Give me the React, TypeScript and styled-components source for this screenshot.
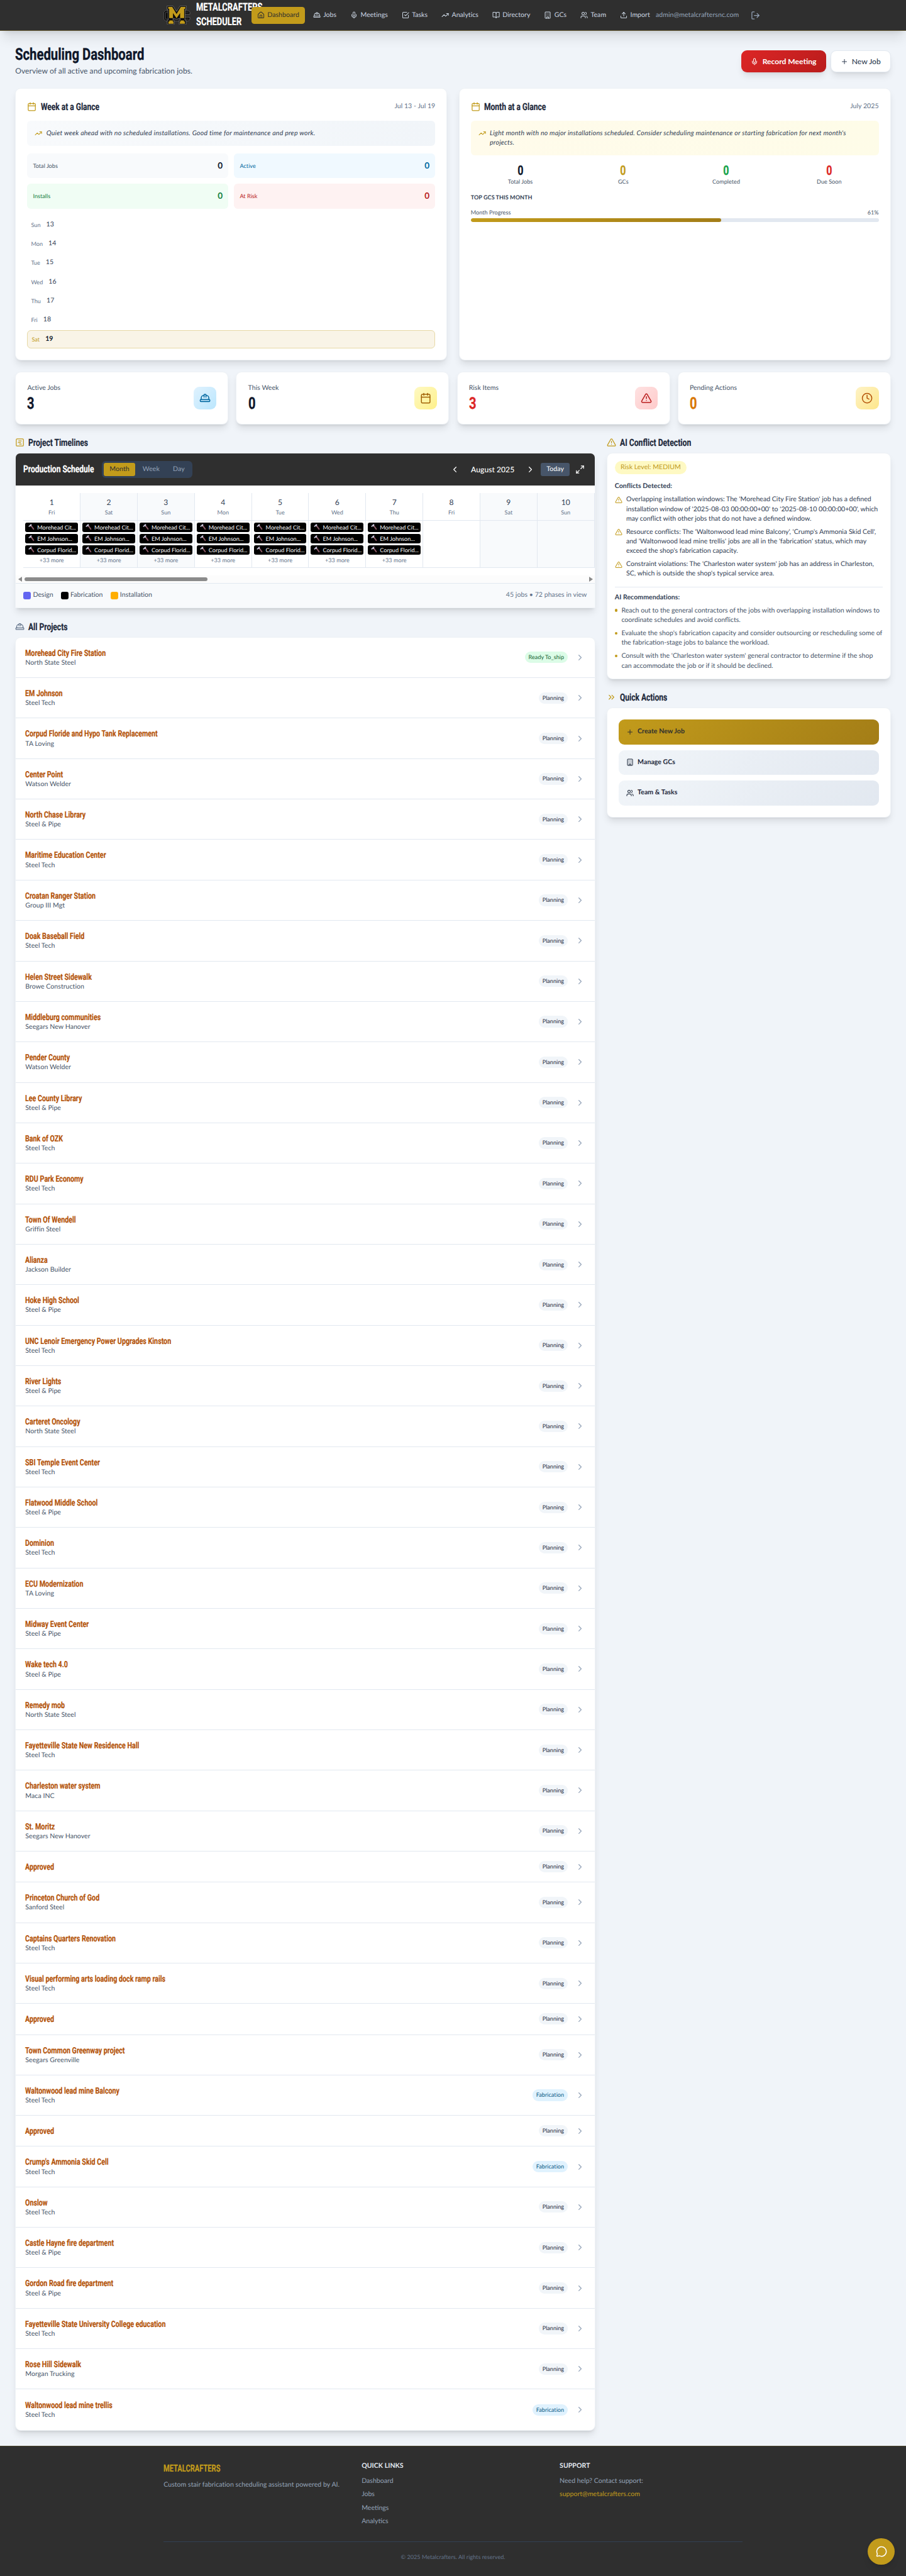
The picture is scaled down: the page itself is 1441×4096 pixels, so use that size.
import React from 'react';
import styled, { createGlobalStyle } from 'styled-components';
import {
  House, HardHat, Mic, TrendingUp, BookOpen, Building, Users, Upload, LogOut, Plus, Calendar,
  TriangleAlert, Clock, SquareChartGantt, ChevronLeft, ChevronRight, ChevronsRight, Maximize2, MessageCircle,
} from 'lucide-react';

const GOLD = '#c29b1b';
const DARK = '#2f2f2f';

const GlobalStyle = createGlobalStyle`
  * { box-sizing: border-box; }
  html, body { margin: 0; padding: 0; overflow: hidden; }
  body { background: #f0f4f9; }
  h1, h2, h3, p, ul { margin: 0; padding: 0; }
  ul { list-style: none; }
  svg { flex-shrink: 0; display: block; }
`;

const Page = styled.div`
  zoom: 0.757;
  height: 5411px;
  overflow: hidden;
  position: relative;
  display: flex;
  flex-direction: column;
  background: #f0f4f9;
  font-family: Lato, 'Liberation Sans', sans-serif;
  font-size: 14px;
  line-height: 20px;
  letter-spacing: 0.04px;
  color: #334155;
  text-rendering: geometricPrecision;
`;

/* Condensed display face: size is given as the nominal heading size. */
const Display = styled.span<{ $size: number; $squeeze?: number; $center?: boolean }>`
  display: inline-block;
  font-family: Roboto, 'Liberation Sans', sans-serif;
  font-weight: 700;
  font-size: ${(p) => p.$size * 1.14}px;
  letter-spacing: 0;
  white-space: nowrap;
  -webkit-text-stroke: 0.014em currentColor;
  transform: translateY(0.055em) scaleX(${(p) => p.$squeeze ?? 0.776});
  transform-origin: ${(p) => (p.$center ? 'center' : 'left')};
`;

/* ---------- Header ---------- */
const Header = styled.header`
  height: 65px;
  flex-shrink: 0;
  background: ${DARK};
  border-bottom: 1px solid #5b4f29;
  box-shadow: 0 20px 25px -5px rgba(0, 0, 0, 0.1), 0 8px 10px -6px rgba(0, 0, 0, 0.1);
  position: relative;
  z-index: 2;
`;
const HeaderInner = styled.div`
  width: 1280px;
  height: 64px;
  margin: 0 auto;
  padding-left: 32px;
  display: flex;
  align-items: center;
`;
const Brand = styled.div`
  width: 184px;
  flex-shrink: 0;
  display: flex;
  align-items: center;
  gap: 12px;
`;
const BrandName = styled.div`
  width: 116px;
  color: #fff;
  line-height: 28px;
`;
const Nav = styled.nav`
  width: 850px;
  flex-shrink: 0;
  display: flex;
  justify-content: space-between;
  position: relative;
`;
const NavItem = styled.a<{ $active?: boolean }>`
  height: 36px;
  padding: 0 12px;
  border-radius: 6px;
  display: flex;
  align-items: center;
  gap: 6px;
  white-space: nowrap;
  color: ${(p) => (p.$active ? DARK : '#cbd5e1')};
  background: ${(p) => (p.$active ? GOLD : 'transparent')};
`;
const Account = styled.div`
  display: flex;
  flex-shrink: 0;
  align-items: center;
  justify-content: space-between;
  width: 219px;
  color: #94a3b8;
`;

/* ---------- Main ---------- */
const Main = styled.main`
  padding: 32px;
  display: flex;
  flex-direction: column;
  gap: 24px;
  height: 5072px;
  flex-shrink: 0;
`;
const TitleBar = styled.div`
  height: 64px;
  display: flex;
  justify-content: space-between;
  align-items: center;
`;
const PageTitle = styled.h1`
  line-height: 36px;
  color: #0f172a;
`;
const Subtitle = styled.p`
  margin-top: 4px;
  font-size: 16px;
  line-height: 24px;
  color: #475569;
`;
const Buttons = styled.div`
  display: flex;
  gap: 9px;
`;
const Button = styled.button<{ $primary?: boolean }>`
  width: ${(p) => (p.$primary ? 178 : 127)}px;
  height: 46px;
  padding: 0;
  justify-content: center;
  border-radius: 12px;
  border: ${(p) => (p.$primary ? '0' : '1px solid #e2e8f0')};
  background: ${(p) => (p.$primary ? 'linear-gradient(135deg, #dc2626, #b91c1c)' : '#fff')};
  color: ${(p) => (p.$primary ? '#fff' : '#334155')};
  box-shadow: 0 10px 15px -3px rgba(0, 0, 0, 0.1), 0 4px 6px -4px rgba(0, 0, 0, 0.1);
  font: ${(p) => (p.$primary ? 700 : 500)} 16px/24px Lato, sans-serif;
  display: flex;
  align-items: center;
  gap: 8px;
  white-space: nowrap;
`;
const Card = styled.section<{ $pad?: number; $radius?: number }>`
  background: #fff;
  border: 1px solid #eef2f6;
  border-radius: ${(p) => p.$radius ?? 12}px;
  padding: ${(p) => p.$pad ?? 24}px;
  box-shadow: 0 10px 15px -3px rgba(0, 0, 0, 0.1), 0 4px 6px -4px rgba(0, 0, 0, 0.1);
`;
const GlanceGrid = styled.div`
  display: grid;
  grid-template-columns: 1fr 1fr;
  gap: 24px;
  height: 572px;
`;
const GlanceHead = styled.div`
  height: 28px;
  margin-bottom: 16px;
  display: flex;
  align-items: center;
  justify-content: space-between;
  color: #64748b;
`;
const IconTitle = styled.h2<{ $icon?: string }>`
  display: flex;
  align-items: center;
  gap: 8px;
  height: 28px;
  line-height: 28px;
  color: #1e293b;
  & > svg { color: ${(p) => p.$icon ?? GOLD}; }
`;
const Insight = styled.div<{ $warm?: boolean }>`
  padding: 16px ${(p) => (p.$warm ? 44 : 16)}px 16px 16px;
  margin-bottom: 16px;
  border-radius: 8px;
  display: flex;
  gap: 8px;
  font-style: italic;
  letter-spacing: 0.28px;
  background: ${(p) => (p.$warm ? 'linear-gradient(90deg, #fffbeb, #fefce8)' : 'linear-gradient(90deg, #f8fafc, #f1f5f9)')};
  & > svg { color: ${GOLD}; margin-top: 2px; }
`;
const WeekStats = styled.div`
  display: grid;
  grid-template-columns: 1fr 1fr;
  gap: 12px;
  margin-bottom: 16px;
`;
const WeekStat = styled.div<{ $bg: string; $ink: string; $label: string }>`
  height: 52px;
  padding: 0 12px;
  border-radius: 8px;
  display: flex;
  align-items: center;
  justify-content: space-between;
  background: ${(p) => p.$bg};
  color: ${(p) => p.$label};
  font-size: 12px;
  b { font-size: 18px; color: ${(p) => p.$ink}; font-weight: 700; }
`;
const Days = styled.div`
  display: flex;
  flex-direction: column;
  gap: 4px;
`;
const Day = styled.div<{ $today?: boolean }>`
  height: ${(p) => (p.$today ? 38 : 36)}px;
  padding: 0 8px;
  display: flex;
  align-items: center;
  gap: 12px;
  border-radius: 8px;
  font-size: 12px;
  color: ${(p) => (p.$today ? GOLD : '#64748b')};
  background: ${(p) => (p.$today ? '#f9f4e7' : 'transparent')};
  border: ${(p) => (p.$today ? '1px solid #e7d9a6' : '0')};
  span { font-size: 14px; font-weight: ${(p) => (p.$today ? 700 : 400)}; color: ${(p) => (p.$today ? '#0f172a' : '#334155')}; }
`;
const MonthStats = styled.div`
  display: grid;
  grid-template-columns: repeat(4, 1fr);
  gap: 8px;
  margin-bottom: 16px;
`;
const MonthStat = styled.div<{ $color: string }>`
  text-align: center;
  font-size: 12px;
  line-height: 16px;
  color: #475569;
  div { height: 32px; line-height: 32px; color: ${(p) => p.$color}; }
`;
const Overline = styled.h3`
  font-size: 12px;
  line-height: 16px;
  font-weight: 700;
  color: #334155;
  margin-bottom: 16px;
`;
const ProgressLabel = styled.div`
  display: flex;
  justify-content: space-between;
  font-size: 12px;
  line-height: 16px;
  margin-bottom: 4px;
  color: #475569;
`;
const Track = styled.div`
  height: 8px;
  border-radius: 4px;
  background: #e2e8f0;
  overflow: hidden;
`;
const Fill = styled.div`
  height: 8px;
  border-radius: 4px;
  background: linear-gradient(90deg, #c29b1b, #a37d17);
`;
const StatGrid = styled.div`
  display: grid;
  grid-template-columns: repeat(4, 1fr);
  gap: 16px;
  height: 110px;
`;
const StatCard = styled(Card)`
  display: flex;
  justify-content: space-between;
  align-items: center;
`;
const StatLabel = styled.div`
  color: #475569;
  margin-bottom: 4px;
`;
const StatValue = styled.div<{ $color: string }>`
  height: 36px;
  line-height: 36px;
  color: ${(p) => p.$color};
`;
const StatIcon = styled.div<{ $from: string; $to: string; $ink: string }>`
  width: 48px;
  height: 48px;
  border-radius: 12px;
  display: grid;
  place-items: center;
  color: ${(p) => p.$ink};
  background: linear-gradient(135deg, ${(p) => p.$from}, ${(p) => p.$to});
`;

const Columns = styled.div`
  display: grid;
  grid-template-columns: repeat(3, minmax(0, 1fr));
  gap: 24px;
  align-items: start;
`;
const Column = styled.div<{ $span?: number }>`
  grid-column: span ${(p) => p.$span ?? 1};
  min-width: 0;
  display: flex;
  flex-direction: column;
  gap: 24px;
`;
const Section = styled.div`
  min-width: 0;
  display: flex;
  flex-direction: column;
  gap: 8px;
`;

/* ---------- Schedule ---------- */
const Schedule = styled(Card)`
  height: 327px;
  padding: 0;
  overflow: hidden;
  display: flex;
  flex-direction: column;
  border-radius: 10px 10px 0 0;
`;
const ScheduleBar = styled.div`
  height: 68px;
  padding: 0 16px;
  display: flex;
  align-items: center;
  background: ${DARK};
  color: #fff;
`;
const ScheduleTitle = styled.div`
  width: 165px;
  line-height: 28px;
`;
const Toggle = styled.div`
  height: 36px;
  padding: 4px;
  display: flex;
  gap: 4px;
  border-radius: 8px;
  background: #334155;
`;
const ToggleItem = styled.div<{ $on?: boolean }>`
  padding: 4px 12px;
  border-radius: 4px;
  background: ${(p) => (p.$on ? GOLD : 'transparent')};
  color: ${(p) => (p.$on ? DARK : '#94a3b8')};
`;
const Period = styled.div`
  margin-left: auto;
  display: flex;
  align-items: center;
  gap: 8px;
  & > svg { margin: 0 4px; }
`;
const PeriodName = styled.div`
  width: 114px;
  text-align: center;
  font-size: 16px;
  font-weight: 500;
`;
const Today = styled.div`
  width: 61px;
  height: 28px;
  padding: 4px 0;
  text-align: center;
  border-radius: 4px;
  background: #475569;
`;
const Grid = styled.div`
  height: 189px;
  padding: 16px 0 16px 16px;
  display: flex;
  overflow: hidden;
`;
const DayCol = styled.div<{ $weekend?: boolean }>`
  width: 120px;
  flex-shrink: 0;
  border-right: 1px solid #e2e8f0;
  background: ${(p) => (p.$weekend ? '#f8fafc' : '#fff')};
`;
const DayHead = styled.div`
  height: 57px;
  padding-top: 8px;
  text-align: center;
  border-bottom: 1px solid #e2e8f0;
  font-size: 12px;
  line-height: 16px;
  color: #64748b;
  div { font-size: 16px; line-height: 24px; color: #334155; }
`;
const DayBody = styled.div`
  height: 100px;
  padding: 4px;
  border-bottom: 1px solid #e2e8f0;
  display: flex;
  flex-direction: column;
  gap: 4px;
  font-size: 12px;
  line-height: 16px;
  text-align: center;
  color: #64748b;
`;
const Phase = styled.div`
  height: 20px;
  padding-left: 5px;
  border-radius: 4px;
  background: #000;
  color: #fff;
  font-size: 12px;
  line-height: 20px;
  display: flex;
  align-items: center;
  gap: 4px;
  white-space: nowrap;
  overflow: hidden;
`;
const ScrollBar = styled.div`
  height: 15px;
  padding: 3px 3px 3px 5px;
  display: flex;
  align-items: center;
  background: #fcfcfc;
`;
const Thumb = styled.div`
  width: 385px;
  height: 9px;
  border-radius: 5px;
  margin-left: 5px;
  margin-right: auto;
  background: #8b8b8b;
`;
const Arrow = styled.i<{ $left?: boolean }>`
  border: 5px solid transparent;
  border-width: 6px 8px;
  ${(p) => (p.$left ? 'border-right-color: #8b8b8b; border-left: 0;' : 'border-left-color: #8b8b8b; border-right: 0;')}
`;
const Legend = styled.div`
  flex: 1;
  padding: 0 16px;
  border-top: 1px solid #e2e8f0;
  background: #f8fafc;
  display: flex;
  align-items: center;
  gap: 16px;
  color: #475569;
`;
const LegendItem = styled.div<{ $color: string }>`
  display: flex;
  align-items: center;
  gap: 4px;
  &::before {
    content: '';
    width: 16px;
    height: 16px;
    border-radius: 4px;
    background: ${(p) => p.$color};
  }
`;
const LegendNote = styled.div`
  margin-left: auto;
  color: #64748b;
`;

/* ---------- Projects ---------- */
const ProjectList = styled(Card)`
  padding: 0;
`;
const ProjectRow = styled.div<{ $short?: boolean }>`
  height: ${(p) => (p.$short ? 65 : 85)}px;
  padding: 0 20px;
  display: flex;
  align-items: center;
  gap: 16px;
  border-bottom: 1px solid #e2e8f0;
  &:last-child { border-bottom: 0; }
`;
const ProjectText = styled.div`
  flex: 1;
  color: #475569;
`;
const ProjectName = styled.div`
  height: 24px;
  line-height: 24px;
  color: #b45309;
`;
const Badge = styled.span<{ $tone: string }>`
  padding: 4px 8px;
  border-radius: 12px;
  font-size: 12px;
  line-height: 16px;
  ${(p) =>
    p.$tone === 'Planning'
      ? 'background: #f1f5f9; color: #1e293b;'
      : p.$tone === 'Fabrication'
        ? 'background: #e0f2fe; color: #075985;'
        : 'background: #dcfce7; color: #166534;'}
`;

/* ---------- Side panel ---------- */
const Risk = styled.div`
  display: inline-block;
  padding: 4px 12px;
  border-radius: 14px;
  background: #fef9c3;
  color: ${GOLD};
  margin-bottom: 16px;
  vertical-align: top;
`;
const SideHeading = styled.h3`
  font-size: 14px;
  line-height: 20px;
  font-weight: 700;
  color: #334155;
  margin-bottom: 8px;
`;
const Items = styled.ul`
  display: flex;
  flex-direction: column;
  gap: 8px;
  letter-spacing: 0;
`;
const Conflict = styled.li`
  display: flex;
  gap: 8px;
  & > svg { color: ${GOLD}; margin-top: 2px; }
`;
const Recommendation = styled.li`
  display: flex;
  gap: 8px;
  color: #475569;
  &::before {
    content: '';
    width: 6px;
    height: 6px;
    margin-top: 6px;
    border-radius: 50%;
    background: ${GOLD};
    flex-shrink: 0;
  }
`;
const Divider = styled.div`
  height: 1px;
  background: #e2e8f0;
  margin: 16px 0 12px;
`;
const Actions = styled(Card)`
  display: flex;
  flex-direction: column;
  gap: 12px;
`;
const Action = styled.div<{ $gold?: boolean }>`
  height: 52px;
  padding: 0 16px;
  border-radius: 12px;
  display: flex;
  align-items: center;
  gap: 8px;
  font-weight: 700;
  color: ${(p) => (p.$gold ? DARK : '#1e293b')};
  background: ${(p) => (p.$gold ? 'linear-gradient(135deg, #c29b1b, #a37d17)' : 'linear-gradient(135deg, #f1f5f9, #e2e8f0)')};
`;

/* ---------- Footer ---------- */
const Footer = styled.footer`
  flex: 1;
  background: ${DARK};
  border-top: 1px solid #464026;
  color: #94a3b8;
`;
const FooterInner = styled.div`
  width: 1216px;
  margin: 0 auto;
  padding-top: 32px;
`;
const FooterGrid = styled.div`
  height: 136px;
  display: grid;
  grid-template-columns: repeat(3, 1fr);
  gap: 32px;
`;
const FooterBrand = styled.div`
  height: 28px;
  line-height: 28px;
  margin-bottom: 12px;
  color: ${GOLD};
`;
const FooterHeading = styled.h3`
  font-size: 14px;
  line-height: 20px;
  font-weight: 700;
  color: #e2e8f0;
  margin-bottom: 12px;
`;
const FooterEmail = styled.li`
  color: ${GOLD};
`;
const Copyright = styled.div`
  margin-top: 32px;
  padding-top: 24px;
  border-top: 1px solid #334155;
  font-size: 12px;
  line-height: 16px;
  text-align: center;
  color: #64748b;
`;
const Chat = styled.button`
  position: absolute;
  right: 24px;
  bottom: 24px;
  width: 56px;
  height: 56px;
  padding: 0;
  border: 0;
  border-radius: 50%;
  display: grid;
  place-items: center;
  background: ${GOLD};
  color: #fff;
  box-shadow: 0 10px 15px -3px rgba(0, 0, 0, 0.1), 0 4px 6px -4px rgba(0, 0, 0, 0.1);
`;

const Logo = () => (
  <svg width="56" height="40" viewBox="0 0 56 40">
    <path d="M4.500 10H52l3.500 3.500V18H44v-1.500H12.500v9H44V24.500h11.500v4L52 32H4.500L0.500 28V14z" fill="#0b0b0b" stroke="#858585" strokeWidth="0.7" />
    <path d="M53 13.500H6L4 15.500v11.500l1.500 1.500H53" fill="none" stroke="#303030" strokeWidth="2.500" />
    <path d="M7.500 0.500H20l7.500 12 7.500-12h13v7.500h-2.500v18.500H45v4h2.500v9H33v-9h2v-4l-7.500 2-7.500-2v4h2.500v9H8v-9h2v-4H9.500V8h-2z" fill="#0b0b0b" stroke="#8f8f8f" strokeWidth="0.8" />
    <path d="M10 2.500h8.500l9 15 9-15H46v4h-2.500V26H35V15.500l-7.500 11-7.500-11V26h-8V6.500h-2z" fill={GOLD} />
    <path d="M12.500 31h7v2.500H21v4.500H10.500v-4.500h2zM36 31h7v2.500h2v4.500H34.500v-4.500H36z" fill={GOLD} />
  </svg>
);

const TaskIcon = ({ size }: { size: number }) => (
  <svg width={size} height={size} viewBox="0 0 24 24" fill="none" stroke="currentColor" strokeWidth="2" strokeLinecap="round" strokeLinejoin="round">
    <path d="m9 11 3 3L22 4" />
    <path d="M21 12v7a2 2 0 0 1-2 2H5a2 2 0 0 1-2-2V5a2 2 0 0 1 2-2h11" />
  </svg>
);

const HammerIcon = () => (
  <svg width="16" height="16" viewBox="0 0 16 16">
    <path d="M6 5.500 8 4l6 8.300-2 1.600z" fill="#8d5a68" />
    <path d="M1.500 6.500 6.500 1.500 9 2l-1.500 1.500 1 1.500-2 1.800-1.500-1L3.500 8z" fill="#c9c5da" />
  </svg>
);

const NAV: [React.ElementType, string][] = [
  [House, 'Dashboard'], [HardHat, 'Jobs'], [Mic, 'Meetings'], [TaskIcon, 'Tasks'], [TrendingUp, 'Analytics'],
  [BookOpen, 'Directory'], [Building, 'GCs'], [Users, 'Team'], [Upload, 'Import'],
];

const WEEK = [['Sun', 13], ['Mon', 14], ['Tue', 15], ['Wed', 16], ['Thu', 17], ['Fri', 18], ['Sat', 19]];

const DAYS = ['Fri', 'Sat', 'Sun', 'Mon', 'Tue', 'Wed', 'Thu', 'Fri', 'Sat', 'Sun'];

const PROJECTS: [string, string?, string?][] = [
  ['Morehead City Fire Station', 'North State Steel', 'Ready To_ship'],
  ['EM Johnson', 'Steel Tech'],
  ['Corpud Floride and Hypo Tank Replacement', 'TA Loving'],
  ['Center Point', 'Watson Welder'],
  ['North Chase Library', 'Steel & Pipe'],
  ['Maritime Education Center', 'Steel Tech'],
  ['Croatan Ranger Station', 'Group III Mgt'],
  ['Doak Baseball Field', 'Steel Tech'],
  ['Helen Street Sidewalk', 'Browe Construction'],
  ['Middleburg communities', 'Seegars New Hanover'],
  ['Pender County', 'Watson Welder'],
  ['Lee County Library', 'Steel & Pipe'],
  ['Bank of OZK', 'Steel Tech'],
  ['RDU Park Economy', 'Steel Tech'],
  ['Town Of Wendell', 'Griffin Steel'],
  ['Alianza', 'Jackson Builder'],
  ['Hoke High School', 'Steel & Pipe'],
  ['UNC Lenoir Emergency Power Upgrades Kinston', 'Steel Tech'],
  ['River Lights', 'Steel & Pipe'],
  ['Carteret Oncology', 'North State Steel'],
  ['SBI Temple Event Center', 'Steel Tech'],
  ['Flatwood Middle School', 'Steel & Pipe'],
  ['Dominion', 'Steel Tech'],
  ['ECU Modernization', 'TA Loving'],
  ['Midway Event Center', 'Steel & Pipe'],
  ['Wake tech 4.0', 'Steel & Pipe'],
  ['Remedy mob', 'North State Steel'],
  ['Fayetteville State New Residence Hall', 'Steel Tech'],
  ['Charleston water system', 'Maca INC'],
  ['St. Moritz', 'Seegars New Hanover'],
  ['Approved'],
  ['Princeton Church of God', 'Sanford Steel'],
  ['Captains Quarters Renovation', 'Steel Tech'],
  ['Visual performing arts loading dock ramp rails', 'Steel Tech'],
  ['Approved'],
  ['Town Common Greenway project', 'Seegars Greenville'],
  ['Waltonwood lead mine Balcony', 'Steel Tech', 'Fabrication'],
  ['Approved'],
  ["Crump's Ammonia Skid Cell", 'Steel Tech', 'Fabrication'],
  ['Onslow', 'Steel Tech'],
  ['Castle Hayne fire department', 'Steel & Pipe'],
  ['Gordon Road fire department', 'Steel & Pipe'],
  ['Fayetteville State University College education', 'Steel Tech'],
  ['Rose Hill Sidewalk', 'Morgan Trucking'],
  ['Waltonwood lead mine trellis', 'Steel Tech', 'Fabrication'],
];

const CONFLICTS = [
  "Overlapping installation windows: The 'Morehead City Fire Station' job has a defined installation window of '2025-08-03 00:00:00+00' to '2025-08-10 00:00:00+00', which may conflict with other jobs that do not have a defined window.",
  "Resource conflicts: The 'Waltonwood lead mine Balcony', 'Crump's Ammonia Skid Cell', and 'Waltonwood lead mine trellis' jobs are all in the 'fabrication' status, which may exceed the shop's fabrication capacity.",
  "Constraint violations: The 'Charleston water system' job has an address in Charleston, SC, which is outside the shop's typical service area.",
];

const ADVICE = [
  'Reach out to the general contractors of the jobs with overlapping installation windows to coordinate schedules and avoid conflicts.',
  "Evaluate the shop's fabrication capacity and consider outsourcing or rescheduling some of the fabrication-stage jobs to balance the workload.",
  "Consult with the 'Charleston water system' general contractor to determine if the shop can accommodate the job or if it should be declined.",
];

const MONTH_PROGRESS = 61.3;

export default function App() {
  return (
    <Page>
      <GlobalStyle />
      <Header>
        <HeaderInner>
          <Brand>
            <Logo />
            <BrandName>
              <Display $size={20} $squeeze={0.75}>METALCRAFTERS</Display>
              <Display $size={20} $squeeze={0.75}>SCHEDULER</Display>
            </BrandName>
          </Brand>
          <Nav>
            {NAV.map(([Icon, label], i) => (
              <NavItem key={label} $active={i === 0}>
                <Icon size={16} />
                {label}
              </NavItem>
            ))}
          </Nav>
          <Account>
            admin@metalcraftersnc.com
            <LogOut size={20} />
          </Account>
        </HeaderInner>
      </Header>

      <Main>
        <TitleBar>
          <div>
            <PageTitle><Display $size={30} $squeeze={0.785}>Scheduling Dashboard</Display></PageTitle>
            <Subtitle>Overview of all active and upcoming fabrication jobs.</Subtitle>
          </div>
          <Buttons>
            <Button $primary><Mic size={16} />Record Meeting</Button>
            <Button><Plus size={16} />New Job</Button>
          </Buttons>
        </TitleBar>

        <GlanceGrid>
          <Card>
            <GlanceHead>
              <IconTitle><Calendar size={20} /><Display $size={18}>Week at a Glance</Display></IconTitle>
              Jul 13 - Jul 19
            </GlanceHead>
            <Insight>
              <TrendingUp size={16} />
              Quiet week ahead with no scheduled installations. Good time for maintenance and prep work.
            </Insight>
            <WeekStats>
              <WeekStat $bg="#f8fafc" $label="#475569" $ink="#0f172a">Total Jobs<b>0</b></WeekStat>
              <WeekStat $bg="#f0f9ff" $label="#0369a1" $ink="#0369a1">Active<b>0</b></WeekStat>
              <WeekStat $bg="#f0fdf4" $label="#15803d" $ink="#15803d">Installs<b>0</b></WeekStat>
              <WeekStat $bg="#fef2f2" $label="#b91c1c" $ink="#b91c1c">At Risk<b>0</b></WeekStat>
            </WeekStats>
            <Days>
              {WEEK.map(([name, date]) => (
                <Day key={name} $today={name === 'Sat'}>{name}<span>{date}</span></Day>
              ))}
            </Days>
          </Card>
          <Card>
            <GlanceHead>
              <IconTitle><Calendar size={20} /><Display $size={18}>Month at a Glance</Display></IconTitle>
              July 2025
            </GlanceHead>
            <Insight $warm>
              <TrendingUp size={16} />
              Light month with no major installations scheduled. Consider scheduling maintenance or starting fabrication for next month's projects.
            </Insight>
            <MonthStats>
              {[['Total Jobs', '#0f172a'], ['GCs', GOLD], ['Completed', '#16a34a'], ['Due Soon', '#dc2626']].map(([label, color]) => (
                <MonthStat key={label} $color={color}>
                  <div><Display $size={24} $center>0</Display></div>
                  {label}
                </MonthStat>
              ))}
            </MonthStats>
            <Overline>TOP GCS THIS MONTH</Overline>
            <ProgressLabel><span>Month Progress</span><span>61%</span></ProgressLabel>
            <Track><Fill style={{ width: `${MONTH_PROGRESS}%` }} /></Track>
          </Card>
        </GlanceGrid>

        <StatGrid>
          <StatCard>
            <div><StatLabel>Active Jobs</StatLabel><StatValue $color="#0f172a"><Display $size={30}>3</Display></StatValue></div>
            <StatIcon $from="#e0f2fe" $to="#bae6fd" $ink="#0369a1"><HardHat size={24} /></StatIcon>
          </StatCard>
          <StatCard>
            <div><StatLabel>This Week</StatLabel><StatValue $color="#0f172a"><Display $size={30}>0</Display></StatValue></div>
            <StatIcon $from="#fef9c3" $to="#fef08a" $ink="#a16207"><Calendar size={24} /></StatIcon>
          </StatCard>
          <StatCard>
            <div><StatLabel>Risk Items</StatLabel><StatValue $color="#dc2626"><Display $size={30}>3</Display></StatValue></div>
            <StatIcon $from="#fee2e2" $to="#fecaca" $ink="#b91c1c"><TriangleAlert size={24} /></StatIcon>
          </StatCard>
          <StatCard>
            <div><StatLabel>Pending Actions</StatLabel><StatValue $color="#d97706"><Display $size={30}>0</Display></StatValue></div>
            <StatIcon $from="#fef3c7" $to="#fde68a" $ink="#b45309"><Clock size={24} /></StatIcon>
          </StatCard>
        </StatGrid>

        <Columns>
          <Column $span={2}>
            <Section>
              <IconTitle><SquareChartGantt size={20} /><Display $size={18}>Project Timelines</Display></IconTitle>
              <Schedule>
                <ScheduleBar>
                  <ScheduleTitle><Display $size={18}>Production Schedule</Display></ScheduleTitle>
                  <Toggle>
                    <ToggleItem $on>Month</ToggleItem>
                    <ToggleItem>Week</ToggleItem>
                    <ToggleItem>Day</ToggleItem>
                  </Toggle>
                  <Period>
                    <ChevronLeft size={20} />
                    <PeriodName>August 2025</PeriodName>
                    <ChevronRight size={20} />
                    <Today>Today</Today>
                    <Maximize2 size={20} />
                  </Period>
                </ScheduleBar>
                <Grid>
                  {DAYS.map((day, i) => (
                    <DayCol key={i} $weekend={day[0] === 'S'}>
                      <DayHead><div>{i + 1}</div>{day}</DayHead>
                      <DayBody>
                        {i < 7 && (
                          <>
                            {['Morehead Cit...', 'EM Johnson...', 'Corpud Florid...'].map((job) => (
                              <Phase key={job}><HammerIcon />{job}</Phase>
                            ))}
                            +33 more
                          </>
                        )}
                      </DayBody>
                    </DayCol>
                  ))}
                </Grid>
                <ScrollBar><Arrow $left /><Thumb /><Arrow /></ScrollBar>
                <Legend>
                  <LegendItem $color="#6366f1">Design</LegendItem>
                  <LegendItem $color="#000">Fabrication</LegendItem>
                  <LegendItem $color="#ffae00">Installation</LegendItem>
                  <LegendNote>45 jobs • 72 phases in view</LegendNote>
                </Legend>
              </Schedule>
            </Section>

            <Section>
              <IconTitle $icon="#64748b"><HardHat size={20} /><Display $size={18}>All Projects</Display></IconTitle>
              <ProjectList>
                {PROJECTS.map(([name, contractor, status = 'Planning'], i) => (
                  <ProjectRow key={i} $short={!contractor}>
                    <ProjectText>
                      <ProjectName><Display $size={16}>{name}</Display></ProjectName>
                      {contractor}
                    </ProjectText>
                    <Badge $tone={status}>{status}</Badge>
                    <ChevronRight size={20} color="#94a3b8" />
                  </ProjectRow>
                ))}
              </ProjectList>
            </Section>
          </Column>

          <Column>
            <Section>
              <IconTitle><TriangleAlert size={20} /><Display $size={18} $squeeze={0.785}>AI Conflict Detection</Display></IconTitle>
              <Card $pad={16}>
                <Risk>Risk Level: MEDIUM</Risk>
                <SideHeading>Conflicts Detected:</SideHeading>
                <Items>
                  {CONFLICTS.map((text) => (
                    <Conflict key={text}><TriangleAlert size={16} />{text}</Conflict>
                  ))}
                </Items>
                <Divider />
                <SideHeading>AI Recommendations:</SideHeading>
                <Items>
                  {ADVICE.map((text) => (
                    <Recommendation key={text}>{text}</Recommendation>
                  ))}
                </Items>
              </Card>
            </Section>
            <Section>
              <IconTitle><ChevronsRight size={20} /><Display $size={18}>Quick Actions</Display></IconTitle>
              <Actions>
                <Action $gold><Plus size={16} />Create New Job</Action>
                <Action><Building size={16} />Manage GCs</Action>
                <Action><Users size={16} />Team &amp; Tasks</Action>
              </Actions>
            </Section>
          </Column>
        </Columns>
      </Main>

      <Footer>
        <FooterInner>
          <FooterGrid>
            <div>
              <FooterBrand><Display $size={18} $squeeze={0.715}>METALCRAFTERS</Display></FooterBrand>
              Custom stair fabrication scheduling assistant powered by AI.
            </div>
            <div>
              <FooterHeading>QUICK LINKS</FooterHeading>
              <Items>
                <li>Dashboard</li>
                <li>Jobs</li>
                <li>Meetings</li>
                <li>Analytics</li>
              </Items>
            </div>
            <div>
              <FooterHeading>SUPPORT</FooterHeading>
              <Items>
                <li>Need help? Contact support:</li>
                <FooterEmail>support@metalcrafters.com</FooterEmail>
              </Items>
            </div>
          </FooterGrid>
          <Copyright>© 2025 Metalcrafters. All rights reserved.</Copyright>
        </FooterInner>
      </Footer>
      <Chat><MessageCircle size={24} /></Chat>
    </Page>
  );
}
